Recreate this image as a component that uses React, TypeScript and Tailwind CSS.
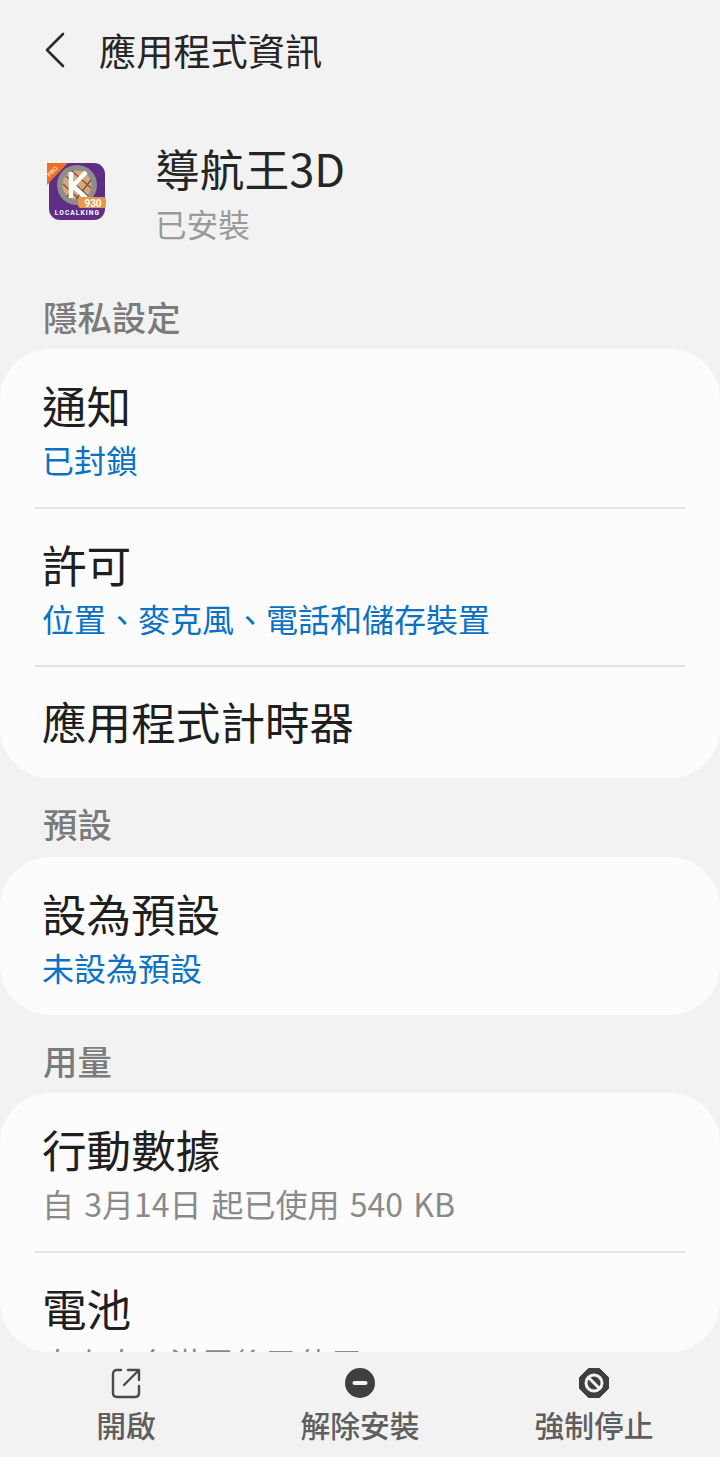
const font = { fontFamily: '"Noto Sans CJK TC", "Roboto", sans-serif' };

const AppIcon = () => (
  <svg width="60" height="60" viewBox="0 0 60 60" className="shrink-0">
    <rect x="3" y="3" width="56" height="57" rx="11" fill="#5e2d85" />
    <path d="M1 3 H22 L1 25 Z" fill="#e8702a" />
    <text x="8" y="13" fontSize="6" fontWeight="700" fill="#f8d9b8" textAnchor="middle" transform="rotate(-45 8 13)" fontFamily="Roboto, sans-serif">PRO</text>
    <circle cx="31" cy="25" r="20" fill="#8f8c8a" />
    <circle cx="31" cy="25" r="14.5" fill="#d9a77a" />
    <path d="M20 16 L42 36 M26 11 L45 28 M17 24 L33 39 M40 13 L21 37 M45 20 L30 39" stroke="#6b5648" strokeWidth="1.3" />
    <path d="M25 12 V38 M27 26 L40 12 M27 26 L40 38" stroke="#fff" strokeWidth="4.5" fill="none" />
    <rect x="32" y="37" width="28" height="11" rx="3" fill="#e39a4c" />
    <text x="47" y="46.5" fontSize="10" fontWeight="700" fill="#fff" textAnchor="middle" fontFamily="Roboto, sans-serif">930</text>
    <text x="31.5" y="55" fontSize="6.6" fontWeight="700" fill="#fff" textAnchor="middle" letterSpacing="1.1" fontFamily="Roboto, sans-serif">LOCALKING</text>
  </svg>
);

const SectionLabel = ({ children, className }: { children: string; className: string }) => (
  <div className={`pl-[43px] text-[34.4px] leading-[40px] font-medium text-[#7b7b7b] ${className}`}>{children}</div>
);

const Row = ({ title, sub, subColor, height, divider, titleTop }: { title: string; sub?: string; subColor?: string; height: string; divider?: boolean; titleTop: string }) => (
  <div className={`${height} relative flex flex-col pl-[42px]`}>
    <div className={`${titleTop} text-[44.6px] leading-[50px] text-[#1f1f1f]`}>{title}</div>
    {sub && <div className={`mt-[8px] text-[32px] leading-[42px] ${subColor}`}>{sub}</div>}
    {divider && <div className="absolute bottom-0 left-[35px] right-[35px] h-[2px] bg-[#e3e3e3]" />}
  </div>
);

const BottomAction = ({ icon, label }: { icon: React.ReactNode; label: string }) => (
  <div className="flex flex-col items-center">
    <div className="h-[34px] flex items-center justify-center">{icon}</div>
    <div className="mt-[6px] text-[29.8px] leading-[36px] font-medium text-[#5f5f5f]">{label}</div>
  </div>
);

export default function App() {
  return (
    <div className="h-[1457px] w-[720px] overflow-hidden bg-[#f2f2f2] flex flex-col" style={font}>
      <div className="h-[1352px] overflow-hidden shrink-0">
        {/* Header */}
        <header className="h-[102px] flex items-center pl-[44px]">
          <svg width="22" height="36" viewBox="0 0 22 36" fill="none" stroke="#2b2b2b" strokeWidth="2.6" strokeLinecap="round" strokeLinejoin="round" className="mb-[2px]">
            <path d="M19 2 L3 18 L19 34" />
          </svg>
          <h1 className="ml-[33px] mb-[3px] text-[37.2px] leading-[44px] font-normal text-[#252525]">應用程式資訊</h1>
        </header>

        {/* App info */}
        <div className="h-[180px] flex pl-[46px] pt-[20px]">
          <div className="pt-[38px]"><AppIcon /></div>
          <div className="ml-[49px]">
            <div className="mt-[18px] text-[44.8px] leading-[56px] text-[#252525]">導航王3D</div>
            <div className="mt-[3px] text-[31.6px] leading-[48px] text-[#9a9a9a]">已安裝</div>
          </div>
        </div>

        <SectionLabel className="mt-[14px] h-[53px]">隱私設定</SectionLabel>
        <section className="rounded-[50px] bg-[#fcfcfc] h-[429px] overflow-hidden">
          <Row title="通知" sub="已封鎖" subColor="text-[#0a72c4]" height="h-[160px]" titleTop="mt-[31px]" divider />
          <Row title="許可" sub="位置、麥克風、電話和儲存裝置" subColor="text-[#0a72c4]" height="h-[158px]" titleTop="mt-[30px]" divider />
          <div className="pl-[42px] pt-[29px] text-[44.6px] leading-[50px] text-[#1f1f1f]">應用程式計時器</div>
        </section>

        <SectionLabel className="mt-[25px] h-[54px]">預設</SectionLabel>
        <section className="rounded-[50px] bg-[#fcfcfc] h-[158px] overflow-hidden">
          <Row title="設為預設" sub="未設為預設" subColor="text-[#0a72c4]" height="h-[158px]" titleTop="mt-[31px]" />
        </section>

        <SectionLabel className="mt-[25px] h-[53px]">用量</SectionLabel>
        <section className="rounded-[50px] bg-[#fcfcfc] h-[259px] overflow-hidden">
          <Row title="行動數據" sub="自 3月14日 起已使用 540 KB" subColor="text-[#8a8a8a] [word-spacing:3px]" height="h-[160px]" titleTop="mt-[31px]" divider />
          <Row title="電池" sub="自上次充滿電後已使用 30%" subColor="text-[#8a8a8a]" height="h-[158px]" titleTop="mt-[30px]" />
        </section>
      </div>

      {/* Bottom actions */}
      <nav className="grid grid-cols-[252px_216px_252px] pt-[14px] justify-items-center">
        <BottomAction
          label="開啟"
          icon={
            <svg width="32" height="32" viewBox="0 0 32 32" fill="none" stroke="#4a4a4a" strokeWidth="2.4" strokeLinecap="round" strokeLinejoin="round">
              <path d="M11 3 H7 Q3 3 3 7 V26 Q3 30 7 30 H25 Q29 30 29 26 V19" />
              <path d="M14 18 L28 4 M18 3 H29 V13" />
            </svg>
          }
        />
        <BottomAction
          label="解除安裝"
          icon={
            <svg width="30" height="30" viewBox="0 0 30 30">
              <circle cx="15" cy="15" r="15" fill="#3f3f3f" />
              <rect x="7.5" y="13" width="15" height="4" rx="2" fill="#f2f2f2" />
            </svg>
          }
        />
        <BottomAction
          label="強制停止"
          icon={
            <svg width="30" height="30" viewBox="0 0 30 30">
              <path d="M9.5 0.5 H20.5 L29.5 9.5 V20.5 L20.5 29.5 H9.5 L0.5 20.5 V9.5 Z" fill="#3f3f3f" stroke="#3f3f3f" strokeLinejoin="round" />
              <circle cx="15" cy="15" r="8" fill="none" stroke="#f2f2f2" strokeWidth="3" />
              <path d="M9.5 9.5 L20.5 20.5" stroke="#f2f2f2" strokeWidth="3" />
            </svg>
          }
        />
      </nav>
    </div>
  );
}
